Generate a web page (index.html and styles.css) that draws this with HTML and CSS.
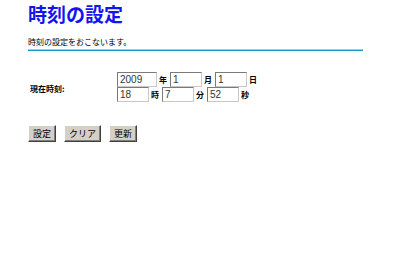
FILE: index.html
```html
<!DOCTYPE html>
<html>
    <head>
        <meta charset="utf-8">
        <title>時刻の設定</title>
        <link rel="stylesheet" href="styles.css">
    </head>
    <body>
        <div class="page">
            <h1 class="title">時刻の設定</h1>
            <p class="desc">時刻の設定をおこないます。</p>
            <div class="rule"></div>

            <div class="form">
                <div class="label">現在時刻:</div>
                <div class="fields">
                    <div class="row">
                        <input class="field wide" type="text" value="2009"><span class="unit">年</span>
                        <input class="field" type="text" value="1"><span class="unit">月</span>
                        <input class="field" type="text" value="1"><span class="unit">日</span>
                    </div>
                    <div class="row">
                        <input class="field" type="text" value="18"><span class="unit">時</span>
                        <input class="field" type="text" value="7"><span class="unit">分</span>
                        <input class="field" type="text" value="52"><span class="unit">秒</span>
                    </div>
                </div>
            </div>

            <div class="buttons">
                <button class="btn">設定</button>
                <button class="btn">クリア</button>
                <button class="btn">更新</button>
            </div>
        </div>
    </body>
</html>
```

FILE: styles.css
```css
body { margin: 0; background: #fff; font-family: "Noto Sans CJK JP", "Liberation Sans", sans-serif; color: #000; }
.page { padding-left: 28px; width: 335px; }
.title { margin: 0; font-size: 19px; line-height: 28px; font-weight: bold; color: #1414f0; }
.desc { margin: 9px 0 2px; font-size: 8px; line-height: 10px; }
.rule { height: 1px; border-top: 1px solid #8ad2ec; background: #1f9ad0; }

.form { display: flex; align-items: center; margin-top: 21px; }
.label { width: 87px; padding-left: 2px; padding-top: 3px; font-size: 8px; font-weight: bold; }
.fields { display: flex; flex-direction: column; }
.row { display: flex; align-items: center; height: 15px; }
.field { box-sizing: border-box; width: 32px; height: 15px; margin: 0; padding: 0 2px; font-family: "Liberation Sans", Arial, sans-serif; font-size: 10px; line-height: 13px; color: #333; background: #fff; border: 1px solid; border-color: #7a7a7a #c8c8c8 #c8c8c8 #7a7a7a; outline: none; }
.field.wide { width: 40px; }
.unit { width: 8px; margin: 0 3px 0 2px; font-size: 8px; font-weight: bold; }

.buttons { display: flex; gap: 8px; margin-top: 23px; }
.btn { height: 17px; margin: 0; padding: 0 4px; font-family: "Noto Sans CJK JP", sans-serif; font-size: 9px; line-height: 13px; color: #000; background: #d4d0c8; border: 1px solid; border-color: #fff #404040 #404040 #fff; box-shadow: inset -1px -1px #808080; }
```
